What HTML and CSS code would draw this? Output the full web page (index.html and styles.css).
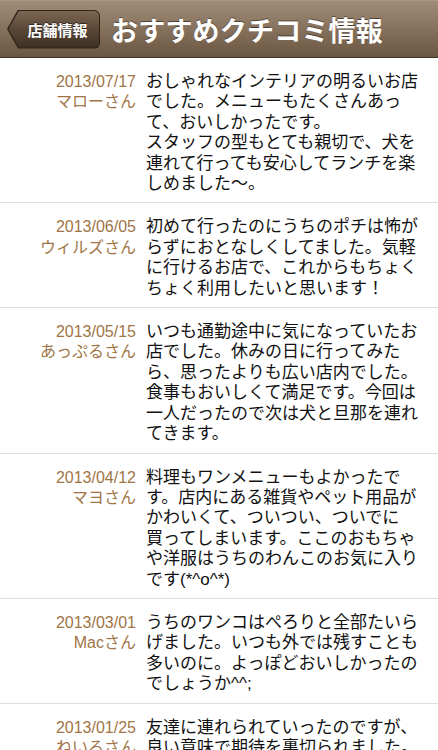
FILE: index.html
```html
<!DOCTYPE html>
<html lang="ja">
<head>
<meta charset="utf-8">
<link rel="stylesheet" href="styles.css">
</head>
<body>
<header class="navbar">
  <div class="back"><span class="back-label">店舗情報</span></div>
  <h1 class="title">おすすめクチコミ情報</h1>
</header>
<main class="list">
  <div class="row">
    <div class="meta"><div class="date">2013/07/17</div><div class="name">マローさん</div></div>
    <div class="body">おしゃれなインテリアの明るいお店でした。メニューもたくさんあって、おいしかったです。<br>スタッフの型もとても親切で、犬を連れて行っても安心してランチを楽しめました〜。</div>
  </div>
  <div class="row">
    <div class="meta"><div class="date">2013/06/05</div><div class="name">ウィルズさん</div></div>
    <div class="body">初めて行ったのにうちのポチは怖がらずにおとなしくしてました。気軽に行けるお店で、これからもちょくちょく利用したいと思います！</div>
  </div>
  <div class="row">
    <div class="meta"><div class="date">2013/05/15</div><div class="name">あっぷるさん</div></div>
    <div class="body">いつも通勤途中に気になっていたお店でした。休みの日に行ってみたら、思ったよりも広い店内でした。<br>食事もおいしくて満足です。今回は一人だったので次は犬と旦那を連れてきます。</div>
  </div>
  <div class="row">
    <div class="meta"><div class="date">2013/04/12</div><div class="name">マヨさん</div></div>
    <div class="body">料理もワンメニューもよかったです。店内にある雑貨やペット用品がかわいくて、ついつい、ついでに<span class="nowrap">買って</span>しまいます。ここのおもちゃや洋服はうちのわんこのお気に入りです(*^o^*)</div>
  </div>
  <div class="row">
    <div class="meta"><div class="date">2013/03/01</div><div class="name">Macさん</div></div>
    <div class="body">うちのワンコはぺろりと全部たいらげました。いつも外では残すことも多いのに。よっぽどおいしかったのでしょうか^^;</div>
  </div>
  <div class="row">
    <div class="meta"><div class="date">2013/01/25</div><div class="name">ねいるさん</div></div>
    <div class="body">友達に連れられていったのですが、良い意味で期待を裏切られました。</div>
  </div>
</main>
</body>
</html>
```

FILE: styles.css
```css
html, body {
  margin: 0;
  padding: 0;
  background: #ffffff;
  width: 438px;
  height: 750px;
  overflow: hidden;
  font-family: "Liberation Sans", "Noto Sans CJK JP", sans-serif;
}

.navbar {
  display: flex;
  align-items: center;
  gap: 11px;
  padding-left: 7px;
  background: linear-gradient(to bottom, #a08c78 0%, #86715c 50%, #6b5643 100%);
  border-top: 1px solid #ab9a8c;
  border-bottom: 1px solid #3f3024;
  height: 56px;
}

.back {
  position: relative;
  height: 39px;
  width: 93px;
  display: flex;
  align-items: center;
  justify-content: center;
  padding-left: 8px;
  box-sizing: border-box;
  background: #2f241b;
  clip-path: polygon(11px 0, 100% 0, 100% 100%, 11px 100%, 0 50%);
  border-radius: 0 6px 6px 0;
}

.back::before {
  content: "";
  position: absolute;
  inset: 1px 1px 1px 1.5px;
  background: linear-gradient(to bottom, #7a6652 0%, #5a4736 50%, #3d3024 100%);
  clip-path: polygon(10.5px 0, 100% 0, 100% 100%, 10.5px 100%, 0 50%);
  border-radius: 0 5px 5px 0;
}

.back-label {
  position: relative;
  color: #ffffff;
  font-size: 15px;
  font-weight: bold;
  text-shadow: 0 -1px 0 rgba(0,0,0,0.5);
}

.title {
  margin: 0;
  color: #ffffff;
  font-size: 27px;
  font-weight: bold;
  letter-spacing: 0.2px;
  text-shadow: 0 -1px 0 rgba(0,0,0,0.45);
}

.list {
  display: flex;
  flex-direction: column;
}

.row {
  display: grid;
  grid-template-columns: 136px 1fr;
  column-gap: 10px;
  padding: 14px 12px 8px 0;
  border-bottom: 1px solid #dedede;
  line-height: 20.4px;
}

.meta {
  text-align: right;
  color: #9f7546;
  font-size: 16px;
}

.body {
  color: #111111;
  font-size: 17px;
}

.nowrap {
  white-space: nowrap;
}
```
